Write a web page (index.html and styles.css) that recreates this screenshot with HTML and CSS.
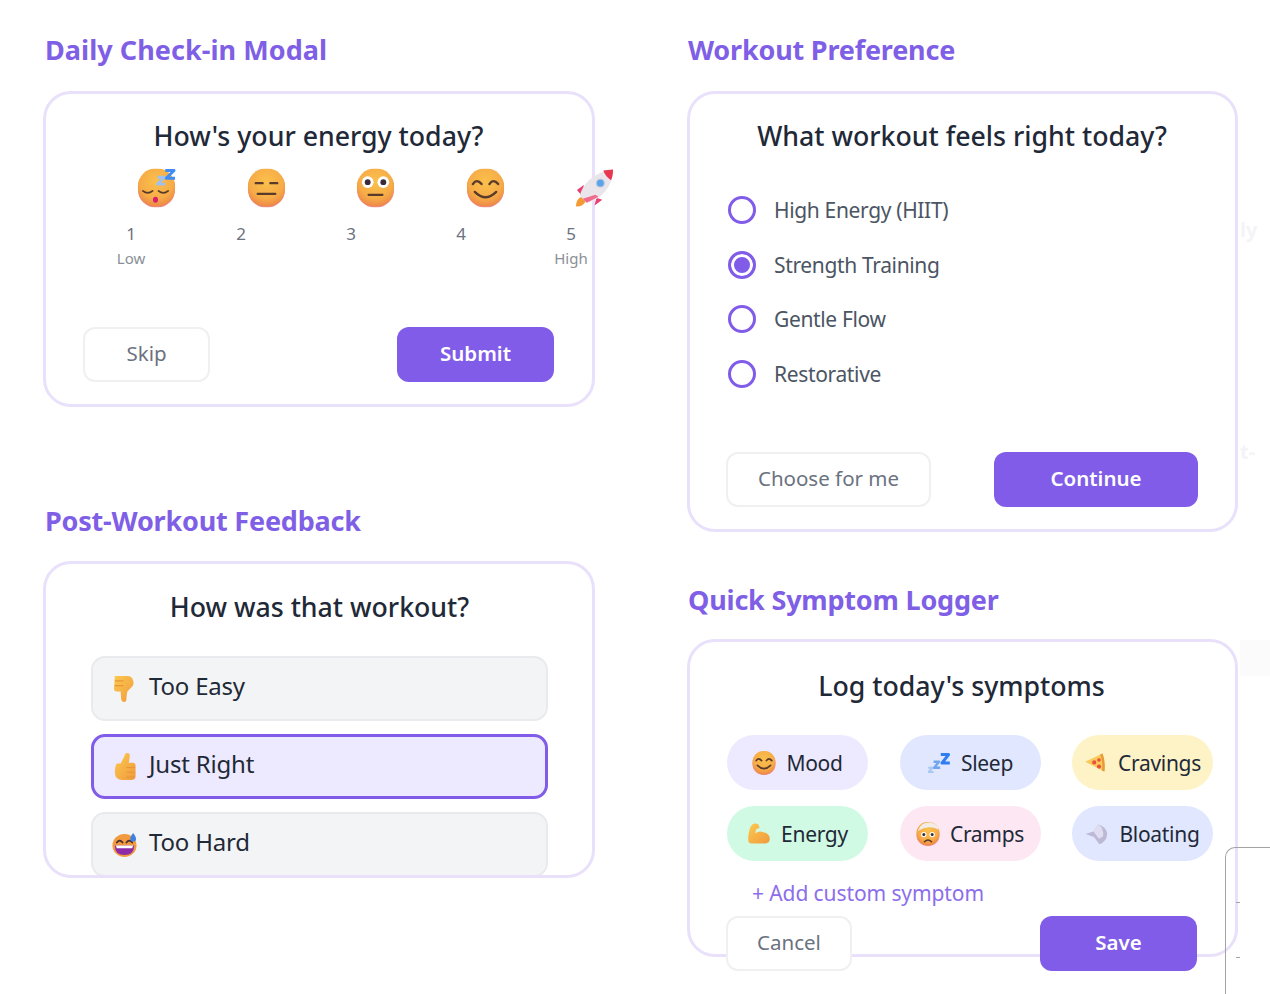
FILE: index.html
```html
<!DOCTYPE html>
<html>
<head>
	<meta charset="UTF-8">
	<title>Check-in components</title>
	<link rel="stylesheet" href="styles.css">
</head>
<body>

<!-- shared emoji drawings -->
<svg class="defs" width="0" height="0">
	<defs>
		<radialGradient id="skin" cx="50%" cy="35%" r="68%">
			<stop offset="0" stop-color="#fbc04c"/>
			<stop offset="0.65" stop-color="#f6ac47"/>
			<stop offset="1" stop-color="#ec8248"/>
		</radialGradient>
		<linearGradient id="hand" x1="0" y1="0" x2="1" y2="1">
			<stop offset="0" stop-color="#fcc94f"/>
			<stop offset="1" stop-color="#f09a3c"/>
		</linearGradient>
		<symbol id="face" viewBox="0 0 40 40">
			<rect x="1" y="1" width="38" height="39" rx="18" fill="#f08a92"/>
			<rect x="1" y="0" width="38" height="39" rx="18" fill="url(#skin)"/>
		</symbol>
	</defs>
</svg>

<main class="page">
	<div class="column">
		<section class="block block-checkin">
			<h2 class="block-title">Daily Check-in Modal</h2>
			<div class="card card-checkin">
				<h3 class="card-title">How's your energy today?</h3>
				<div class="emoji-row">
					<svg class="emoji" viewBox="0 0 40 40">
						<use href="#face" width="40" height="40"/>
						<path d="M6 23q5 4 10 0M22 23q5 4 10 0" fill="none" stroke="#5a3a2a" stroke-width="1.800" stroke-linecap="round"/>
						<ellipse cx="19" cy="32" rx="2.600" ry="3" fill="#d81e6c"/>
						<path d="M21 9h7l-7 7h8" fill="none" stroke="#9fc0ee" stroke-width="3" stroke-linejoin="round"/>
						<path d="M29 2h9l-8 8h9" fill="none" stroke="#3f8cf2" stroke-width="3" stroke-linejoin="round"/>
					</svg>
					<svg class="emoji" viewBox="0 0 40 40">
						<use href="#face" width="40" height="40"/>
						<path d="M9 15h7M24 15h7M11 26h18" stroke="#5a3a2a" stroke-width="2.400" stroke-linecap="round"/>
					</svg>
					<svg class="emoji" viewBox="0 0 40 40">
						<use href="#face" width="40" height="40"/>
						<circle cx="12" cy="14" r="6" fill="#fff"/><circle cx="28" cy="14" r="6" fill="#fff"/>
						<circle cx="12" cy="14" r="3" fill="#3a2a3a"/><circle cx="28" cy="14" r="3" fill="#3a2a3a"/>
						<path d="M13 27h14" stroke="#5a3a2a" stroke-width="2.400" stroke-linecap="round"/>
					</svg>
					<svg class="emoji" viewBox="0 0 40 40">
						<use href="#face" width="40" height="40"/>
						<path d="M7 16q4-6 9 0M24 16q4-6 9 0M9 24q11 11 22 0" fill="none" stroke="#5a3a2a" stroke-width="2.400" stroke-linecap="round"/>
					</svg>
					<svg class="emoji" viewBox="0 0 40 40">
						<path d="M1 39q0-8 6-10l4 4q-2 6-10 6z" fill="#f59a32"/>
						<path d="M9 17l-7 5 6 7zM22 30l-2 8 8-6z" fill="#e8406f"/>
						<path d="M12 35l-7-7C8 14 22 3 39 1c0 17-12 31-27 34z" fill="#e9e5ea"/>
						<path d="M29 2l10-1c0 4-.4 7-2 11q-6-4-8-10z" fill="#e8384f"/>
						<path d="M12 35l-4-4 13-4 3 2z" fill="#f06a8c"/>
						<circle cx="26" cy="15" r="4" fill="#5aa4ea" stroke="#b7c6de" stroke-width="1.200"/>
					</svg>
				</div>
				<div class="scale-row">
					<div class="scale-item"><span class="scale-num">1</span><span class="scale-note">Low</span></div>
					<div class="scale-item"><span class="scale-num">2</span></div>
					<div class="scale-item"><span class="scale-num">3</span></div>
					<div class="scale-item"><span class="scale-num">4</span></div>
					<div class="scale-item"><span class="scale-num">5</span><span class="scale-note">High</span></div>
				</div>
				<div class="actions">
					<button class="btn btn-ghost btn-skip">Skip</button>
					<button class="btn btn-main btn-submit">Submit</button>
				</div>
			</div>
		</section>

		<section class="block block-feedback">
			<h2 class="block-title">Post-Workout Feedback</h2>
			<div class="card card-feedback">
				<h3 class="card-title">How was that workout?</h3>
				<div class="option">
					<svg class="option-icon" viewBox="0 0 26 30">
						<path d="M3 2h13q5 0 6 5 1 4-1 6l-5 5q-1 4-1 8 0 3-2.500 3t-3-3l-.5-8H5q-3 0-3-3z" fill="url(#hand)"/>
						<path d="M3 7h9M3 12h9" stroke="#e8953a" stroke-width="1.200"/>
					</svg>
					Too Easy
				</div>
				<div class="option option-on">
					<svg class="option-icon" viewBox="0 0 26 30">
						<path d="M5 12h4l4-8q.5-3 3-3t2.500 3l-1 7h4q3 0 3 3v11q0 4-4 4H11q-8 0-8-8 0-6 2-9z" fill="url(#hand)"/>
						<path d="M15 16h9M15 21h9M15 26h8" stroke="#e8953a" stroke-width="1.200"/>
					</svg>
					Just Right
				</div>
				<div class="option">
					<svg class="option-icon" viewBox="0 0 26 30">
						<ellipse cx="13" cy="16" rx="12.500" ry="12" fill="#f29a3e"/>
						<path d="M5 13q3-4 6 0M15 13q3-4 6 0" fill="none" stroke="#4a3030" stroke-width="1.800" stroke-linecap="round"/>
						<path d="M3 16h20q0 10-10 10T3 16z" fill="#8c2aa8"/>
						<path d="M4 16h18l-1 3H5z" fill="#fff"/>
						<path d="M22 3q3 4 3 6a3 3 0 0 1-6 0q0-2 3-6z" fill="#3f7fe0"/>
					</svg>
					Too Hard
				</div>
			</div>
		</section>
	</div>

	<div class="column column-right">
		<section class="block block-workout">
			<h2 class="block-title">Workout Preference</h2>
			<div class="card card-workout">
				<h3 class="card-title">What workout feels right today?</h3>
				<ul class="radio-list">
					<li class="radio-item"><span class="radio"></span>High Energy (HIIT)</li>
					<li class="radio-item"><span class="radio radio-on"></span>Strength Training</li>
					<li class="radio-item"><span class="radio"></span>Gentle Flow</li>
					<li class="radio-item"><span class="radio"></span>Restorative</li>
				</ul>
				<div class="actions">
					<button class="btn btn-ghost btn-choose">Choose for me</button>
					<button class="btn btn-main btn-continue">Continue</button>
				</div>
			</div>
		</section>

		<section class="block block-symptoms">
			<h2 class="block-title">Quick Symptom Logger</h2>
			<div class="card card-symptoms">
				<h3 class="card-title">Log today's symptoms</h3>
				<div class="chips">
					<div class="chip chip-mood">
						<svg class="chip-icon" viewBox="0 0 40 40">
							<use href="#face" width="40" height="40"/>
							<path d="M7 16q4-6 9 0M24 16q4-6 9 0M9 24q11 11 22 0" fill="none" stroke="#5a3a2a" stroke-width="2.800" stroke-linecap="round"/>
						</svg>
						Mood
					</div>
					<div class="chip chip-sleep">
						<svg class="chip-icon" viewBox="0 0 40 40">
							<path d="M2 28h7l-6 7h8" fill="none" stroke="#a9c8f2" stroke-width="3.500" stroke-linejoin="round"/>
							<path d="M11 18h9l-8 10h10" fill="none" stroke="#6fa6ee" stroke-width="4" stroke-linejoin="round"/>
							<path d="M23 6h13L25 20h13" fill="none" stroke="#2f7df0" stroke-width="5" stroke-linejoin="round"/>
						</svg>
						Sleep
					</div>
					<div class="chip chip-cravings">
						<svg class="chip-icon" viewBox="0 0 40 40">
							<path d="M2 18L31 4q5 14 3 30z" fill="#fbc85a"/>
							<path d="M31 4q5 14 3 30l-4-1q2-14-3-27z" fill="#e69a3c"/>
							<circle cx="17" cy="19" r="3.500" fill="#e8503f"/><circle cx="25" cy="15" r="3" fill="#e8503f"/><circle cx="25" cy="26" r="3.500" fill="#e8503f"/>
						</svg>
						Cravings
					</div>
					<div class="chip chip-energy">
						<svg class="chip-icon" viewBox="0 0 40 40">
							<path d="M9 4q5-3 10 0l2 6-6 2-1 7q6-5 13-2 11 2 11 11 0 8-9 8H8q-6 0-6-6 0-14 4-22z" fill="url(#hand)"/>
						</svg>
						Energy
					</div>
					<div class="chip chip-cramps">
						<svg class="chip-icon" viewBox="0 0 40 40">
							<use href="#face" width="40" height="40"/>
							<path d="M3 15Q8 0 24 1q12 2 14 12Q20 4 3 15z" fill="#f1ece6"/>
							<circle cx="13" cy="21" r="4.500" fill="#fff"/><circle cx="27" cy="21" r="4.500" fill="#fff"/>
							<circle cx="13" cy="21" r="2.500" fill="#3a2a3a"/><circle cx="27" cy="21" r="2.500" fill="#3a2a3a"/>
							<path d="M14 33q6-6 12 0" fill="none" stroke="#5a3a2a" stroke-width="2.400" stroke-linecap="round"/>
						</svg>
						Cramps
					</div>
					<div class="chip chip-bloating">
						<svg class="chip-icon" viewBox="0 0 40 40">
							<path d="M1 20l13-4 8-12q14 4 15 16-1 13-13 17l-9-12z" fill="#bdb8d6"/>
							<path d="M14 16l8-12q10 6 8 20l-7 4z" fill="#e0ddf0"/>
						</svg>
						Bloating
					</div>
				</div>
				<a class="add-link">+ Add custom symptom</a>
				<div class="actions">
					<button class="btn btn-ghost btn-cancel">Cancel</button>
					<button class="btn btn-main btn-save">Save</button>
				</div>
			</div>
		</section>
	</div>
</main>

<!-- what is left of the window behind, along the right edge -->
<div class="behind behind-a">ly</div>
<div class="behind behind-b">t-</div>
<div class="behind-panel"></div>
<div class="behind-frame"></div>
<div class="behind-tick behind-tick-a"></div>
<div class="behind-tick behind-tick-b"></div>

</body>
</html>
```

FILE: styles.css
```css
* {
	box-sizing: border-box;
}

html, body {
	margin: 0;
	height: 994px;
	overflow: hidden;
	background: #fff;
}

body {
	font-family: "Noto Sans", "Open Sans", sans-serif;
	color: #1f2937;
	position: relative;
}

.defs {
	position: absolute;
}

.page {
	display: grid;
	grid-template-columns: 552px 551px;
	column-gap: 92px;
	padding: 29px 0 0 43px;
	position: relative;
	z-index: 1;
}

.column {
	display: flex;
	flex-direction: column;
}

.block-checkin {
	margin-bottom: 93px;
}

.block-workout {
	margin-bottom: 47px;
}

.block-title {
	margin: 0 0 21px;
	padding-left: 2px;
	height: 41px;
	line-height: 41px;
	font-size: 27px;
	font-weight: 700;
	color: #7f5fe6;
	letter-spacing: -0.2px;
}

.block-checkin .block-title {
	letter-spacing: 0.050px;
}

.column-right .block-title {
	padding-left: 1px;
}

.block-feedback .block-title {
	margin-bottom: 20px;
}

.block-symptoms .block-title {
	margin-bottom: 19px;
}

.card {
	border: 3px solid #e9e0fb;
	border-radius: 28px;
	background: #fff;
	padding: 25px 38px 0 37px;
}

.card-checkin {
	height: 316px;
}

.card-feedback {
	height: 317px;
	padding: 26px 44px 0 45px;
	overflow: hidden;
}

.card-workout {
	height: 441px;
	padding-left: 36px;
	padding-right: 37px;
}

.card-symptoms {
	height: 318px;
	padding: 27px 38px 0 36px;
}

.card-title {
	margin: 0;
	height: 34px;
	line-height: 34px;
	text-align: center;
	font-size: 26.700px;
	font-weight: 500;
	color: #1f2937;
}

/* energy scale */
.emoji-row {
	display: flex;
	gap: 70.500px;
	margin-top: 15px;
	padding-left: 54px;
}

.emoji {
	width: 39px;
	height: 40px;
	flex: none;
	filter: blur(0.4px);
}

.scale-row {
	display: flex;
	gap: 70px;
	margin-top: 14px;
	padding-left: 28px;
}

.scale-item {
	width: 40px;
	flex: none;
	display: flex;
	flex-direction: column;
	align-items: center;
	color: #6b7280;
}

.scale-num {
	font-size: 17px;
	line-height: 24px;
}

.scale-note {
	font-size: 15px;
	line-height: 24px;
	color: #8a8f98;
}

.actions {
	display: flex;
	justify-content: space-between;
}

.card-checkin .actions {
	margin-top: 57px;
}

.card-workout .actions {
	margin-top: 51px;
}

.card-symptoms .actions {
	margin-top: 7px;
}

.btn {
	height: 55px;
	border-radius: 12px;
	font-family: inherit;
	font-size: 20.500px;
	padding: 0 0 3px;
}

.btn-ghost {
	background: #fff;
	border: 2px solid #f0f0f3;
	color: #6b7280;
}

.btn-main {
	background: #805ce8;
	border: 0;
	color: #fff;
	font-weight: 600;
}

.btn-skip { width: 127px; }
.btn-submit { width: 157px; }
.btn-choose { width: 205px; }
.btn-continue { width: 204px; }
.btn-cancel { width: 126px; }
.btn-save { width: 157px; }

/* radios */
.radio-list {
	list-style: none;
	margin: 30px 0 0;
	padding: 0 0 0 2px;
}

.radio-item {
	display: flex;
	align-items: center;
	gap: 18px;
	height: 54.500px;
	font-size: 21px;
	letter-spacing: -0.350px;
	color: #4b5563;
}

.radio {
	width: 28px;
	height: 28px;
	flex: none;
	border: 3px solid #805ce8;
	border-radius: 50%;
	background: #fff;
}

.radio-on {
	background: #805ce8;
	box-shadow: inset 0 0 0 3px #fff;
}

/* feedback options */
.option {
	display: flex;
	align-items: center;
	gap: 12.500px;
	height: 65px;
	margin-top: 13px;
	padding: 0 0 6px 18.500px;
	background: #f3f4f6;
	border: 2px solid #e9eaee;
	border-radius: 14px;
	font-size: 24px;
	letter-spacing: -0.200px;
	color: #1f2937;
}

.card-title + .option {
	margin-top: 32px;
}

.option-on {
	background: #ede9fe;
	border: 3px solid #805ce8;
	padding-left: 17.500px;
}

.option-icon {
	width: 25px;
	height: 29px;
	flex: none;
	filter: blur(0.3px);
	margin-top: 6px;
}

/* symptom chips */
.chips {
	display: grid;
	grid-template-columns: repeat(3, 141px);
	column-gap: 31.500px;
	row-gap: 16px;
	margin-top: 32px;
	padding-left: 1px;
}

.chip {
	height: 55px;
	border-radius: 28px;
	display: flex;
	align-items: center;
	justify-content: center;
	gap: 10px;
	font-size: 21px;
	letter-spacing: -0.300px;
	color: #1f2937;
}

.chip-icon {
	width: 24px;
	height: 24px;
	flex: none;
	filter: blur(0.3px);
}

.chip-mood { background: #ede9fe; }
.chip-sleep { background: #e0e7ff; }
.chip-cravings { background: #fef3c7; }
.chip-energy { background: #d1fae5; }
.chip-cramps { background: #fce7f3; }
.chip-bloating { background: #e0e7ff; }

.add-link {
	display: block;
	margin: 16px 0 0 26px;
	height: 32px;
	line-height: 32px;
	font-size: 21px;
	letter-spacing: -0.100px;
	color: #8c6eea;
}

/* faded window behind */
.behind {
	position: absolute;
	left: 1240px;
	font-size: 20px;
	font-weight: 700;
	white-space: nowrap;
	color: #f4f3f8;
}

.behind-a { top: 216px; }
.behind-b { top: 438px; }

.behind-panel {
	position: absolute;
	left: 1240px;
	top: 640px;
	width: 30px;
	height: 36px;
	background: #fbfbfb;
}

.behind-frame {
	position: absolute;
	left: 1225px;
	top: 847px;
	width: 45px;
	height: 147px;
	border: solid #a3a3a3;
	border-width: 1px 0 0 1px;
	border-radius: 10px 0 0 0;
	z-index: 2;
}

.behind-tick {
	position: absolute;
	left: 1236px;
	width: 4px;
	height: 1px;
	background: #a3a3a3;
	z-index: 2;
}

.behind-tick-a { top: 902px; }
.behind-tick-b { top: 957px; }
```
